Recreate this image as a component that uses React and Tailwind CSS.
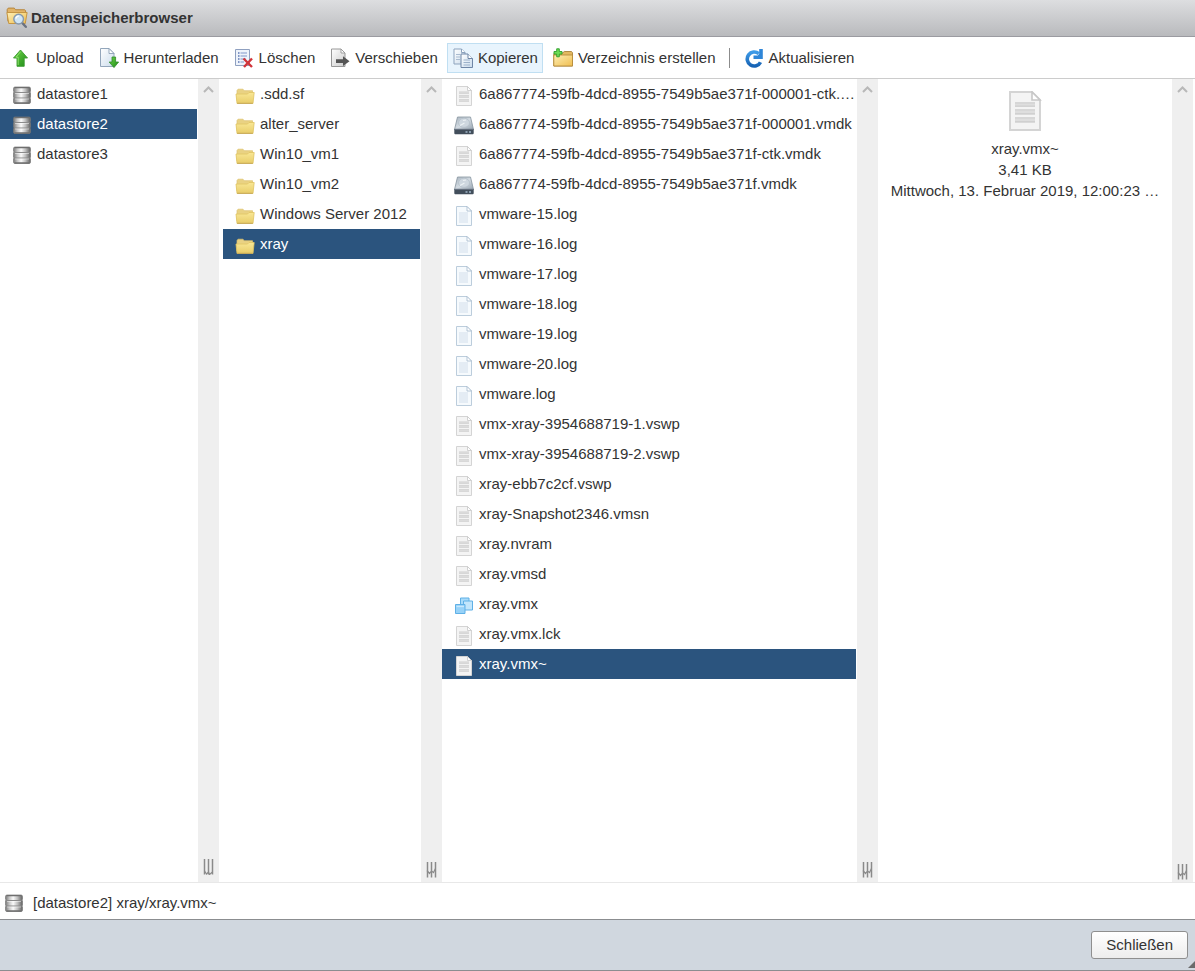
import React, { useState } from "react";

function Defs() {
  return (
    <svg width="0" height="0" className="absolute" aria-hidden="true">
      <defs>
        <linearGradient id="metal" x1="0" x2="1" y1="0" y2="0">
          <stop offset="0" stopColor="#777777" />
          <stop offset="0.22" stopColor="#c4c4c4" />
          <stop offset="0.45" stopColor="#fafafa" />
          <stop offset="0.7" stopColor="#c0c0c0" />
          <stop offset="1" stopColor="#606060" />
        </linearGradient>
        <linearGradient id="folder" x1="0" x2="0" y1="0" y2="1">
          <stop offset="0" stopColor="#f9e795" />
          <stop offset="1" stopColor="#e8cc68" />
        </linearGradient>
        <linearGradient id="amber" x1="0" x2="1" y1="0" y2="1">
          <stop offset="0" stopColor="#fdeeb4" />
          <stop offset="1" stopColor="#f0be50" />
        </linearGradient>
        <linearGradient id="green" x1="0" x2="1" y1="0" y2="1">
          <stop offset="0" stopColor="#6fd548" />
          <stop offset="1" stopColor="#1d8a17" />
        </linearGradient>
        <linearGradient id="bluepage" x1="0" x2="1" y1="0" y2="1">
          <stop offset="0" stopColor="#ffffff" />
          <stop offset="1" stopColor="#cbdcec" />
        </linearGradient>
        <linearGradient id="graypage" x1="0" x2="1" y1="0" y2="1">
          <stop offset="0" stopColor="#ffffff" />
          <stop offset="1" stopColor="#cccccc" />
        </linearGradient>
        <linearGradient id="disk" x1="0" x2="1" y1="0" y2="1">
          <stop offset="0" stopColor="#a9b4be" />
          <stop offset="0.5" stopColor="#d3dbe2" />
          <stop offset="1" stopColor="#97a4b0" />
        </linearGradient>
        <linearGradient id="refresh" x1="0" x2="0" y1="0" y2="1">
          <stop offset="0" stopColor="#3e9be8" />
          <stop offset="1" stopColor="#1763b4" />
        </linearGradient>
      </defs>
    </svg>
  );
}

function Svg({ children, className = "size-5" }) {
  return (
    <svg viewBox="0 0 20 20" className={`shrink-0 ${className}`} aria-hidden="true">
      {children}
    </svg>
  );
}

const DatastoreIcon = ({ className }) => (
  <Svg className={className}>
    <path d="M3 1h14q1.500 0 1.500 1.500V5q0 .8-.8 1 .8.300.8 1v4q0 .8-.8 1 .8.300.8 1v3q0 1.500-1.500 1.500H3Q1.500 17.500 1.500 16v-3q0-.8.8-1-.8-.300-.8-1V7q0-.8.8-1-.8-.300-.8-1V2.500Q1.500 1 3 1z" fill="url(#metal)" stroke="#7a7a7a" strokeWidth="0.7" />
    <path d="M2.500 6.500h15M2.500 12h15" stroke="#8b8b8b" strokeWidth="1" />
    <path d="M3 7.500h14M3 13h14" stroke="#ffffff" strokeWidth="0.800" opacity="0.6" />
    <path d="M2.500 1.700h15M2.500 17h15" stroke="#6f6f6f" strokeWidth="1.300" />
  </Svg>
);

const FolderIcon = ({ className }) => (
  <Svg className={className}>
    <path d="M2 15V4.500l1-1.300h5l1.200 1.500h8.300V15z" fill="#e9d283" stroke="#dcc26d" strokeWidth="0.7" />
    <path d="M1 8h11.500l1.500-1.500h5.200l-1.200 11H2z" fill="url(#folder)" stroke="#e0c463" strokeWidth="0.8" />
    <path d="M2.200 17.300h15.500" stroke="#c2a557" strokeWidth="0.9" />
  </Svg>
);

const FileIcon = ({ className }) => (
  <Svg className={className}>
    <path d="M2.500.5h11l4 4v15h-15z" fill="#f4f4f4" stroke="#d4d4d4" />
    <path d="M13.500.5v4h4z" fill="#ffffff" stroke="#c8c8c8" strokeWidth="0.8" />
    <path d="M5 5.500h10v2.500H5zM5 9h10v3H5zM5 13h10v3H5z" fill="#dedede" />
    <path d="M5 6h10M5 7.600h10M5 9.500h10M5 11.300h10M5 13.500h10M5 15.300h10" stroke="#d0d0d0" strokeWidth="0.600" />
  </Svg>
);

const LogIcon = ({ className }) => (
  <Svg className={className}>
    <path d="M2.500.5h10.500l4.500 4.500v14.500h-15z" fill="#f6fafd" stroke="#bccddc" />
    <path d="M5 6h9v11H5z" fill="#e4ecf4" />
    <path d="M13 .5V5h4.500z" fill="#ffffff" stroke="#a3b8cc" strokeWidth="0.8" />
  </Svg>
);

const DiskIcon = ({ className }) => (
  <Svg className={className}>
    <path d="M3.500 1h13L19.500 13.500H.5z" fill="url(#disk)" stroke="#8794a0" strokeWidth="0.8" />
    <ellipse cx="10" cy="6.800" rx="5.500" ry="4.600" fill="#ced7df" stroke="#b4bfc9" strokeWidth="0.8" />
    <path d="M6 9.500 10.500 7M9 4.500l3-.5" stroke="#edf2f5" strokeWidth="1.200" />
    <path d="M.3 13h19.400v4.500l-.7.800H1l-.7-.800z" fill="#424e5b" />
    <path d="M.5 13.200h19" stroke="#798693" strokeWidth="0.900" />
    <path d="M11.500 16h2M15 16h2" stroke="#9fb4c8" strokeWidth="1.300" />
  </Svg>
);

const VmIcon = ({ className }) => (
  <Svg className={className}>
    <g fill="#a9dbfa" stroke="#5fb0e6" strokeWidth="1">
      <path d="M6.500 2h8.500v8H6.500z" />
      <path d="M9.500 5h9v9h-9z" fill="#c2e6fc" />
      <path d="M1.500 8.500h9.500v9H1.500z" fill="#97d2f8" />
    </g>
    <path d="M2.500 10.500h7.500" stroke="#c9e9fc" strokeWidth="1.300" />
  </Svg>
);

const UploadIcon = () => (
  <Svg>
    <path d="M9.500 2 16.500 10h-3.300v8.300H6V10H2.500z" fill="url(#green)" stroke="#3a9a30" strokeWidth="0.900" strokeLinejoin="round" />
    <path d="M9.500 3.800 5 9.200h2.200v7.800" fill="none" stroke="#9be878" strokeWidth="0.800" />
  </Svg>
);

const DownloadIcon = () => (
  <Svg>
    <path d="M1.500.5h8.500l5 5v13H1.500z" fill="url(#bluepage)" stroke="#93a6bb" />
    <path d="M10 .5v5h5z" fill="#ffffff" stroke="#8c9fb5" strokeWidth="0.900" />
    <path d="M13 9h3.600v5h3L15 19.600 10.200 14H13z" fill="url(#green)" stroke="#2f8a28" strokeWidth="0.800" />
  </Svg>
);

const DeleteIcon = () => (
  <Svg>
    <path d="M1.500 1.500h14v16h-14z" fill="#eef3fb" stroke="#8fa0c0" />
    <path d="M4 5h1.500M4 8h1.500M4 11h1.500M4 14h1.500" stroke="#5d78b4" strokeWidth="1.500" />
    <path d="M6.500 5H13M6.500 8H13M6.500 11H12M6.500 14H10" stroke="#a5b6da" strokeWidth="1.300" />
    <path d="m9.500 10.500 8.500 8.500M18 10.500 10 19" stroke="#d0343a" strokeWidth="2.400" />
  </Svg>
);

const MoveIcon = () => (
  <Svg>
    <path d="M1.500 1h9.500l4 4v13.500H1.500z" fill="url(#graypage)" stroke="#989898" />
    <path d="M11 1v4h4z" fill="#ffffff" stroke="#989898" strokeWidth="0.900" />
    <path d="M6 11.200h7V8.200l6.500 5L13 18v-3H6z" fill="#555555" />
  </Svg>
);

const CopyIcon = () => (
  <Svg>
    <path d="M1 1h7.500L12 4.500V16H1z" fill="url(#bluepage)" stroke="#8da3bd" />
    <path d="M8.500 1v3.500H12" fill="#ffffff" stroke="#8da3bd" />
    <path d="M3 6.500h4M3 9h4M3 11.500h4" stroke="#a9bbd0" />
    <path d="M8 6h7l4.500 4.500v9H8z" fill="url(#bluepage)" stroke="#6f86a6" />
    <path d="M15 6v4.500h4.500" fill="#ffffff" stroke="#6f86a6" />
    <path d="M10.500 12h6.500M10.500 14.500h6.500M10.500 17h6.500" stroke="#9db2cb" />
  </Svg>
);

const NewFolderIcon = () => (
  <Svg>
    <path d="M.8 18V6l1-1.200h8l1.500-1.300h7.200l1 1.200V18z" fill="#e3b860" stroke="#a9823a" strokeWidth="0.900" />
    <path d="M.8 7h18.700v11H.8z" fill="url(#amber)" stroke="#b88d3c" strokeWidth="0.900" />
    <path d="M3.700.8h2.600v2.700H9v2.600H6.300v2.700H3.700V6.100H1V3.500h2.700z" fill="#6bdc55" stroke="#2f9e2b" strokeWidth="0.900" />
  </Svg>
);

const RefreshIcon = () => (
  <Svg>
    <path d="M16.500 14.200A7 7 0 1 1 14.800 5.700" fill="none" stroke="url(#refresh)" strokeWidth="3.600" />
    <path d="M18.800 1v10H9.500V7.500h4.300l1.400-1.700V1z" fill="#2f86d8" />
  </Svg>
);

const BrowserIcon = () => (
  <Svg className="size-[22px]">
    <path d="M1.800 13 1 2.500 2 1h5.500l1.200 1.500h8.300l.8 1v3.200z" fill="#e2b468" stroke="#b5853c" strokeWidth="0.900" />
    <path d="M.8 5h18.400L17.500 15H2.500z" fill="url(#amber)" stroke="#c49544" strokeWidth="0.900" />
    <path d="m14.800 14.500 3.200 3.500" stroke="#6b7280" strokeWidth="2.200" strokeLinecap="round" />
    <circle cx="11.500" cy="11" r="4.400" fill="#cfe5f6" stroke="#8799ad" strokeWidth="1.300" />
    <path d="M9 10.500a2.700 2.700 0 0 1 2.600-2.200" fill="none" stroke="#ffffff" strokeWidth="1.200" />
  </Svg>
);

const TOOLS = [
  { label: "Upload", Icon: UploadIcon },
  { label: "Herunterladen", Icon: DownloadIcon },
  { label: "Löschen", Icon: DeleteIcon },
  { label: "Verschieben", Icon: MoveIcon },
  { label: "Kopieren", Icon: CopyIcon, active: true },
  { label: "Verzeichnis erstellen", Icon: NewFolderIcon },
  { label: "Aktualisieren", Icon: RefreshIcon, separated: true },
];

const DATASTORES = ["datastore1", "datastore2", "datastore3"].map((name) => ({ name, Icon: DatastoreIcon }));

const FOLDERS = [".sdd.sf", "alter_server", "Win10_vm1", "Win10_vm2", "Windows Server 2012", "xray"].map(
  (name) => ({ name, Icon: FolderIcon })
);

const FILES = [
  { name: "6a867774-59fb-4dcd-8955-7549b5ae371f-000001-ctk.…", Icon: FileIcon },
  { name: "6a867774-59fb-4dcd-8955-7549b5ae371f-000001.vmdk", Icon: DiskIcon },
  { name: "6a867774-59fb-4dcd-8955-7549b5ae371f-ctk.vmdk", Icon: FileIcon },
  { name: "6a867774-59fb-4dcd-8955-7549b5ae371f.vmdk", Icon: DiskIcon },
  { name: "vmware-15.log", Icon: LogIcon },
  { name: "vmware-16.log", Icon: LogIcon },
  { name: "vmware-17.log", Icon: LogIcon },
  { name: "vmware-18.log", Icon: LogIcon },
  { name: "vmware-19.log", Icon: LogIcon },
  { name: "vmware-20.log", Icon: LogIcon },
  { name: "vmware.log", Icon: LogIcon },
  { name: "vmx-xray-3954688719-1.vswp", Icon: FileIcon },
  { name: "vmx-xray-3954688719-2.vswp", Icon: FileIcon },
  { name: "xray-ebb7c2cf.vswp", Icon: FileIcon },
  { name: "xray-Snapshot2346.vmsn", Icon: FileIcon },
  { name: "xray.nvram", Icon: FileIcon },
  { name: "xray.vmsd", Icon: FileIcon },
  { name: "xray.vmx", Icon: VmIcon },
  { name: "xray.vmx.lck", Icon: FileIcon },
  { name: "xray.vmx~", Icon: FileIcon },
];

function ToolButton({ label, Icon, active }) {
  return (
    <button
      type="button"
      className={`flex h-[30px] items-center gap-[5px] whitespace-nowrap border pl-[5px] pr-1 ${
        active ? "border-[#c0dff2] bg-[#e8f4fd]" : "border-transparent"
      }`}
    >
      <Icon />
      {label}
    </button>
  );
}

function ScrollRail({ shape, className = "pb-1" }) {
  return (
    <div className={`flex w-[21px] shrink-0 flex-col items-center justify-between bg-[#efefef] pt-[7px] ${className}`}>
      <button type="button" aria-label="Nach oben" className="block">
        <svg viewBox="0 0 11 7" className="h-[7px] w-[11px]" aria-hidden="true">
          <path d="M1 6 5.500 1.500 10 6" fill="none" stroke="#b8b8b8" strokeWidth="2" />
        </svg>
      </button>
      <svg viewBox="0 0 11 16" className="h-4 w-[11px]" aria-hidden="true">
        <path d="M1.500 0v15.500M5.500 0v15.500M9.500 0v15.500" stroke="#8a8a8a" strokeWidth="1.500" />
        <path d={shape} fill="none" stroke="#8a8a8a" strokeWidth="1.200" />
      </svg>
    </div>
  );
}

const TURNED = "M1.500 12l2 3 2-2 1 2.500 3-2.500";
const CROSSED = "M1 8.500l2.500 3 2-2.500 2 1.500 2-4";

function ItemList({ label, items, selected, onSelect }) {
  return (
    <ul aria-label={label} className="min-w-0 flex-1">
      {items.map(({ name, Icon }) => (
        <li key={name}>
          <button
            type="button"
            aria-pressed={selected === name}
            onClick={() => onSelect(name)}
            className={`flex h-[30px] w-full items-start gap-[5px] whitespace-nowrap pl-3 text-left leading-[30px] ${
              selected === name ? "bg-[#2b547e] text-white" : ""
            }`}
          >
            <Icon className="mt-[7px] size-5" />
            {name}
          </button>
        </li>
      ))}
    </ul>
  );
}

export default function App() {
  const [store, setStore] = useState("datastore2");
  const [folder, setFolder] = useState("xray");
  const [file, setFile] = useState("xray.vmx~");

  return (
    <div className="flex min-h-screen flex-col bg-white font-['Liberation_Sans',Arial,sans-serif] text-[15px] leading-5 text-[#333333]">
      <Defs />
      <header className="flex h-[37px] items-center gap-[3px] border-b border-[#9b9ba1] bg-linear-to-b from-[#dddee0] to-[#b9babd] pb-px pl-1.5">
        <BrowserIcon />
        <h1 className="font-bold">Datenspeicherbrowser</h1>
      </header>

      <div role="toolbar" aria-label="Dateiaktionen" className="flex h-[42px] items-center gap-1 border-b border-[#cccccc] pl-[5px]">
        {TOOLS.map(({ separated, ...tool }) => (
          <React.Fragment key={tool.label}>
            {separated && <span className="mx-1 h-5 w-px bg-[#8c8c8c]" />}
            <ToolButton {...tool} />
          </React.Fragment>
        ))}
      </div>

      <main className="grid flex-1 grid-cols-[219px_223px_minmax(0,1fr)_317px] border-b border-[#e8e8e8]">
        <section className="flex gap-px">
          <ItemList label="Datenspeicher" items={DATASTORES} selected={store} onSelect={setStore} />
          <ScrollRail shape={TURNED} className="pb-[7px]" />
        </section>
        <section className="flex gap-px pl-1">
          <ItemList label="Verzeichnisse" items={FOLDERS} selected={folder} onSelect={setFolder} />
          <ScrollRail shape={CROSSED} />
        </section>
        <section className="flex gap-px">
          <ItemList label="Dateien" items={FILES} selected={file} onSelect={setFile} />
          <ScrollRail shape={CROSSED} />
        </section>
        <section className="flex pr-0.5">
          <div className="flex min-w-0 flex-1 flex-col items-center pt-3 text-center">
            <FileIcon className="size-10" />
            <p className="mt-[7px] leading-[21px]">{file}</p>
            <p className="leading-[21px]">3,41 KB</p>
            <p className="whitespace-nowrap leading-[22px]">Mittwoch, 13. Februar 2019, 12:00:23 …</p>
          </div>
          <ScrollRail shape={CROSSED} className="pb-0.5" />
        </section>
      </main>

      <div className="flex h-9 items-center gap-[9px] pl-1">
        <DatastoreIcon className="mt-1.5 size-5" />
        <span className="mt-1">
          [{store}] {folder}/{file}
        </span>
      </div>

      <footer className="relative flex h-[52px] items-center justify-end border-y border-[#8b8d90] bg-[#d0d7df] pr-[7px]">
        <button
          type="button"
          className="h-[28px] rounded-[3px] border border-[#8f8f8f] bg-linear-to-b from-white to-[#ededed] px-[14px]"
        >
          Schließen
        </button>
        <svg viewBox="0 0 7 7" className="absolute bottom-0.5 right-0 size-[7px]" aria-hidden="true">
          <path d="M0 7 7 0v7z" fill="#6a6a6a" />
        </svg>
      </footer>
    </div>
  );
}
